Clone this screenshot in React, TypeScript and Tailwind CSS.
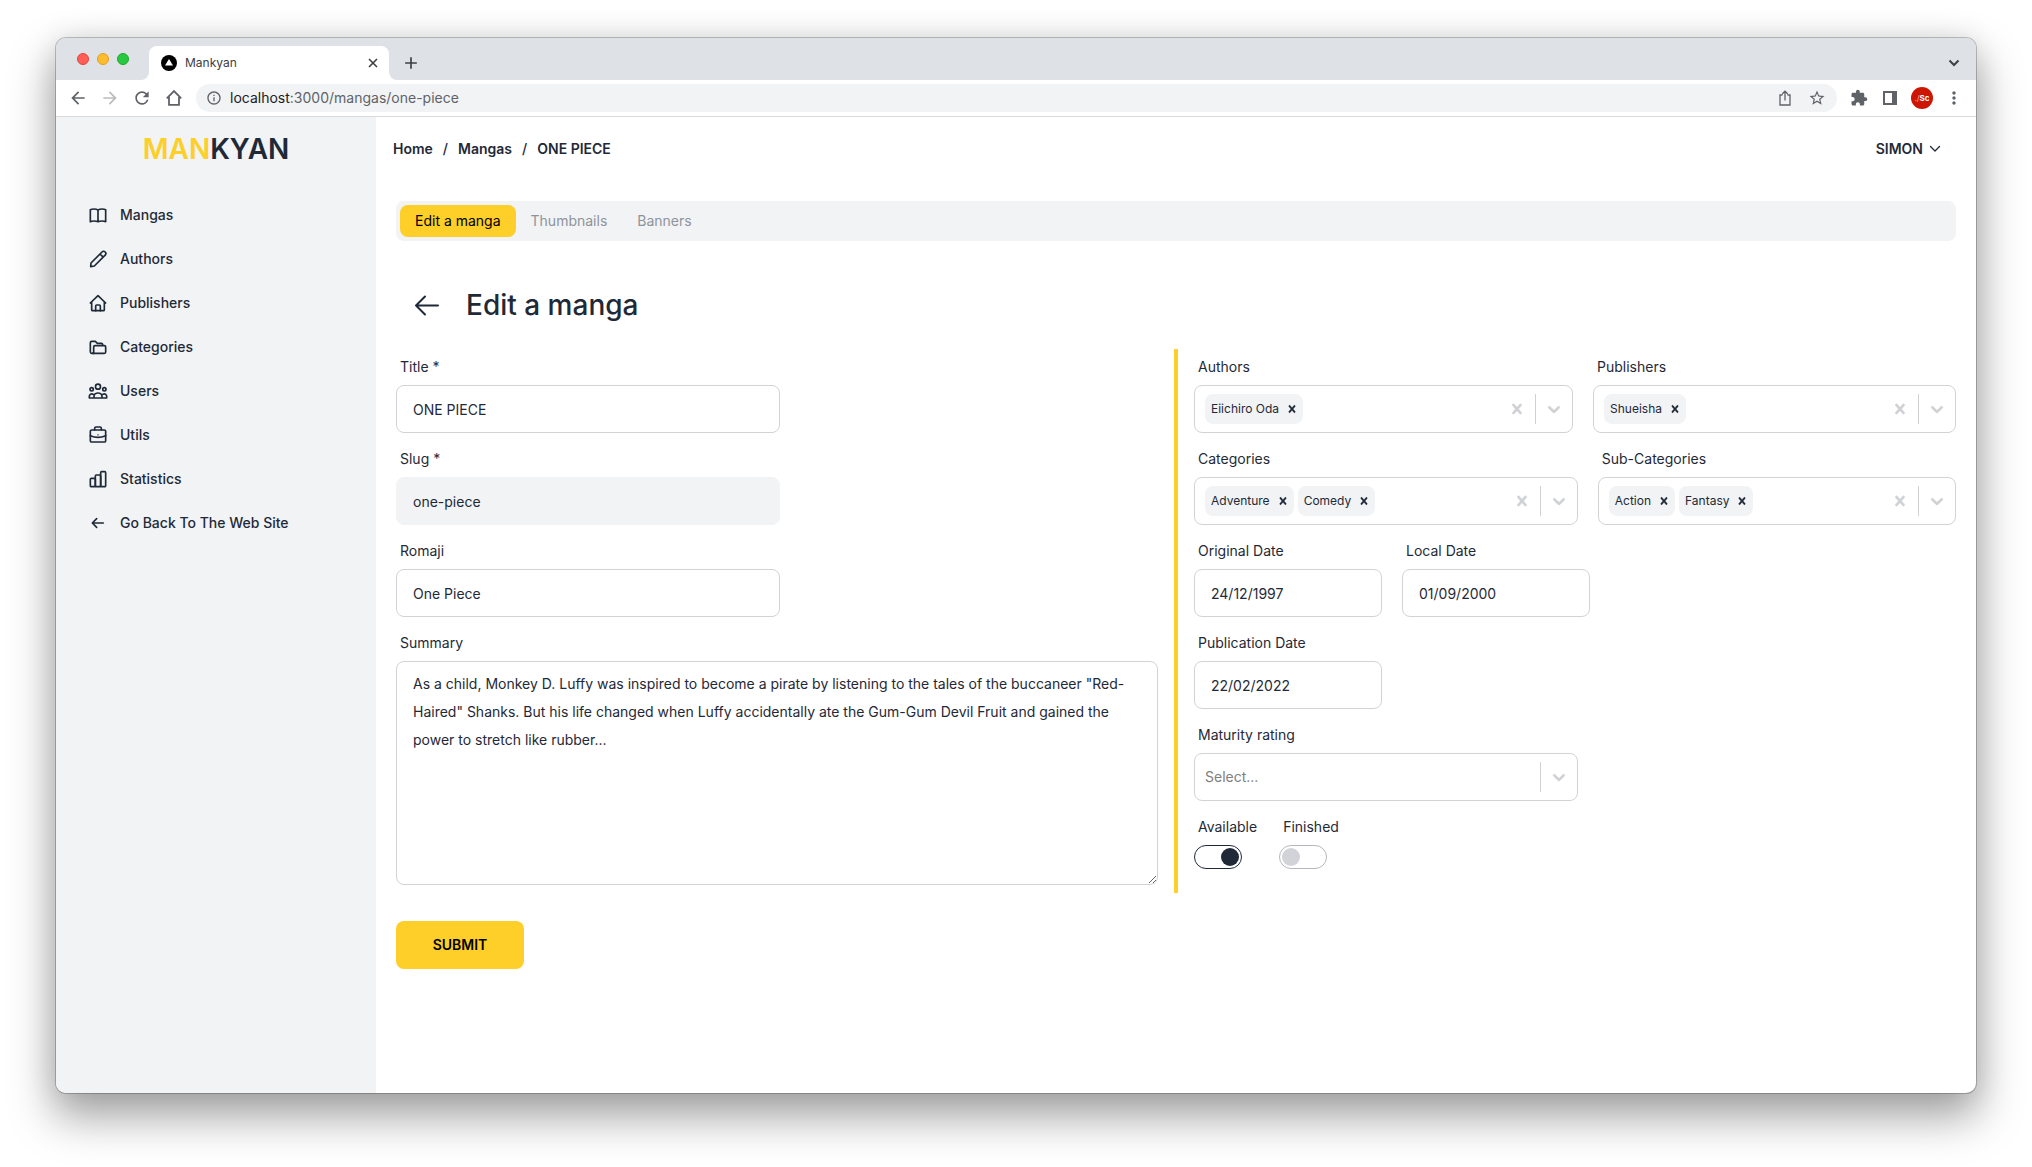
import { useId, type ReactNode } from "react";
import { MdExtension, MdStarOutline, MdRefresh, MdArrowBack, MdArrowForward, MdAdd, MdMoreVert, MdOutlineInfo } from "react-icons/md";

const CROSS =
  "M14.348 14.849c-0.469 0.469-1.229 0.469-1.697 0l-2.651-3.030-2.651 3.029c-0.469 0.469-1.229 0.469-1.697 0-0.469-0.469-0.469-1.229 0-1.697l2.758-3.15-2.759-3.152c-0.469-0.469-0.469-1.228 0-1.697s1.228-0.469 1.697 0l2.652 3.031 2.651-3.031c0.469-0.469 1.228-0.469 1.697 0s0.469 1.229 0 1.697l-2.758 3.152 2.758 3.15c0.469 0.469 0.469 1.229 0 1.698z";
const CHEVRON =
  "M4.516 7.548c0.436-0.446 1.043-0.481 1.576 0l3.908 3.747 3.908-3.747c0.533-0.481 1.141-0.446 1.574 0 0.436 0.445 0.408 1.197 0 1.615-0.406 0.418-4.695 4.502-4.695 4.502-0.217 0.223-0.502 0.335-0.787 0.335s-0.57-0.112-0.789-0.335c0 0-4.287-4.084-4.695-4.502s-0.436-1.17 0-1.615z";

function Glyph({ d, size }: { d: string; size: number }) {
  return (
    <svg width={size} height={size} viewBox="0 0 20 20" fill="currentColor" stroke="currentColor" strokeWidth="0.4" aria-hidden="true">
      <path d={d} />
    </svg>
  );
}

function NavIcon({ children }: { children: ReactNode }) {
  return (
    <svg
      className="size-5 shrink-0"
      viewBox="0 0 60 60"
      fill="none"
      stroke="currentColor"
      strokeWidth="5"
      strokeLinecap="round"
      strokeLinejoin="round"
      aria-hidden="true"
    >
      {children}
    </svg>
  );
}

const navItems: { label: string; icon: ReactNode }[] = [
  {
    label: "Mangas",
    icon: (
      <path d="M30 15c-4-2.500-8-3-12-3s-8 .5-11 2v36c3-1.500 7-2 11-2s8 .5 12 2c4-1.500 8-2 12-2s8 .5 11 2V14c-3-1.500-7-2-11-2s-8 .5-12 3zv35" />
    ),
  },
  {
    label: "Authors",
    icon: <path d="M8 53l1-11L42 9a6.500 6.500 0 0 1 9.500 9.500L19 51zM36 15l9.500 9.500" />,
  },
  {
    label: "Publishers",
    icon: (
      <>
        <path d="M7 30L30 8l23 22M11 27v23a3 3 0 0 0 3 3h32a3 3 0 0 0 3-3V27" />
        <path d="M23 53V39a3 3 0 0 1 3-3h8a3 3 0 0 1 3 3v14" />
      </>
    ),
  },
  {
    label: "Categories",
    icon: (
      <>
        <path d="M18 49h-7a4 4 0 0 1-4-4V17a4 4 0 0 1 4-4h11l6 6h12a4 4 0 0 1 4 4v2" />
        <path d="M21 26h28a4 4 0 0 1 4 4v15a4 4 0 0 1-4 4H14c2-1 3-3 3-5V30a4 4 0 0 1 4-4z" />
      </>
    ),
  },
  {
    label: "Users",
    icon: (
      <>
        <circle cx="30" cy="17" r="7.500" />
        <circle cx="11" cy="25" r="5" />
        <circle cx="49" cy="25" r="5" />
        <path d="M18 51v-5a12 10 0 0 1 24 0v5zM18 51H4v-5c0-6 6-9 11-6M42 51h14v-5c0-6-6-9-11-6" />
      </>
    ),
  },
  {
    label: "Utils",
    icon: (
      <>
        <rect x="7" y="15" width="46" height="36" rx="4" />
        <path d="M20 15v-5a4 4 0 0 1 4-4h12a4 4 0 0 1 4 4v5M7 32c14 6 32 6 46 0" />
        <path d="M30 29v1" strokeWidth="3.500" />
      </>
    ),
  },
  {
    label: "Statistics",
    icon: (
      <>
        <rect x="7" y="28" width="15" height="25" rx="3" />
        <rect x="22" y="18" width="16" height="35" rx="3" />
        <rect x="38" y="8" width="15" height="45" rx="3" />
      </>
    ),
  },
  {
    label: "Go Back To The Web Site",
    icon: <path d="M46 30H14M26 17L13 30l13 13" />,
  },
];

function Label({ htmlFor, children }: { htmlFor: string; children: ReactNode }) {
  return (
    <label htmlFor={htmlFor} className="block px-1 text-sm">
      {children}
    </label>
  );
}

function TextField({ label, value, className, readOnly }: { label: string; value: string; className: string; readOnly?: boolean }) {
  const id = useId();
  return (
    <div className="flex flex-col gap-2">
      <Label htmlFor={id}>{label}</Label>
      <input
        id={id}
        type="text"
        defaultValue={value}
        readOnly={readOnly}
        className={
          readOnly
            ? `h-12 rounded-lg border border-[#f1f3f5] bg-[#f1f3f5] px-4 text-sm outline-none ${className}`
            : `h-12 rounded-lg border border-[#d1d3d6] bg-white px-4 text-sm outline-none ${className}`
        }
      />
    </div>
  );
}

function MultiSelect({ label, values }: { label: string; values: string[] }) {
  const id = useId();
  return (
    <div className="flex flex-auto flex-col gap-2">
      <Label htmlFor={id}>{label}</Label>
      <div className="flex h-12 items-center rounded-lg border border-[#d1d3d6]">
        <div className="flex min-w-0 flex-1 items-center gap-1 px-2.5">
          {values.map((v) => (
            <span key={v} className="flex h-[30px] items-center rounded-lg bg-[#f1f3f5] text-xs">
              <span className="pr-0.5 pl-1.5">{v}</span>
              <button type="button" aria-label={`Remove ${v}`} className="px-1">
                <Glyph d={CROSS} size={14} />
              </button>
            </span>
          ))}
          <input id={id} type="text" className="w-0 min-w-0 flex-1 text-sm outline-none" />
        </div>
        <div className="flex items-center text-[#cfd1d4]">
          <button type="button" aria-label={`Clear ${label}`} className="p-2">
            <Glyph d={CROSS} size={20} />
          </button>
          <span className="h-[30px] w-px bg-[#cfd1d4]" />
          <button type="button" aria-label={`Open ${label}`} className="p-2">
            <Glyph d={CHEVRON} size={20} />
          </button>
        </div>
      </div>
    </div>
  );
}

function Toggle({ label, checked }: { label: string; checked?: boolean }) {
  const id = useId();
  return (
    <div className="flex flex-col gap-2">
      <Label htmlFor={id}>{label}</Label>
      <input
        id={id}
        type="checkbox"
        role="switch"
        defaultChecked={checked}
        className="flex h-6 w-12 appearance-none items-center rounded-full border border-[#b4b7bd] px-0.5 before:size-[18px] before:rounded-full before:bg-[#d1d3d8] checked:justify-end checked:border-gray-800 checked:before:bg-[#1f2937]"
      />
    </div>
  );
}

function BrowserChrome() {
  return (
    <div className="text-[#5f6368]">
      <div className="flex h-[42px] items-end bg-[#dee1e6] pr-3">
        <div className="flex gap-2 self-center pl-[21px]">
          <span className="size-3 rounded-full border border-[#e0443e] bg-[#ff5f57]" />
          <span className="size-3 rounded-full border border-[#dea123] bg-[#febc2e]" />
          <span className="size-3 rounded-full border border-[#1aab29] bg-[#28c840]" />
        </div>
        <svg className="ml-3 size-2" viewBox="0 0 8 8" aria-hidden="true">
          <path d="M8 0v8H0a8 8 0 0 0 8-8z" fill="#fff" />
        </svg>
        <div className="flex h-[34px] w-60 items-center rounded-t-lg bg-white px-3">
          <svg className="size-4" viewBox="0 0 16 16" aria-hidden="true">
            <circle cx="8" cy="8" r="8" fill="#000" />
            <path d="M8 4l4 6.500H4z" fill="#fff" />
          </svg>
          <span className="ml-2 flex-1 text-xs text-[#3c4043]">Mankyan</span>
          <button type="button" aria-label="Close tab" className="-mr-0.5 text-[#3c4043]">
            <svg className="size-3" viewBox="0 0 12 12" fill="none" stroke="currentColor" strokeWidth="1.600" aria-hidden="true">
              <path d="M2 2l8 8M10 2l-8 8" />
            </svg>
          </button>
        </div>
        <svg className="size-2" viewBox="0 0 8 8" aria-hidden="true">
          <path d="M0 0v8h8a8 8 0 0 1-8-8z" fill="#fff" />
        </svg>
        <button type="button" aria-label="New tab" className="flex h-[34px] items-center pl-1 text-[#3c4043]">
          <MdAdd className="size-5" />
        </button>
        <button type="button" aria-label="Search tabs" className="ml-auto flex h-[34px] items-center px-1 text-[#3c4043]">
          <svg className="size-3" viewBox="0 0 12 12" fill="none" stroke="currentColor" strokeWidth="2" aria-hidden="true">
            <path d="M1.500 3.500L6 8l4.500-4.500" />
          </svg>
        </button>
      </div>
      <div className="flex h-[37px] items-center border-b border-[#d9dadd] bg-white px-3">
        <div className="flex items-center gap-3">
          <button type="button" aria-label="Back">
            <MdArrowBack className="size-5" />
          </button>
          <button type="button" aria-label="Forward" className="text-[#babcbe]">
            <MdArrowForward className="size-5" />
          </button>
          <button type="button" aria-label="Reload">
            <MdRefresh className="size-5" />
          </button>
          <button type="button" aria-label="Home page">
            <svg className="size-5" viewBox="0 0 20 20" fill="none" stroke="currentColor" strokeWidth="1.800" aria-hidden="true">
              <path d="M2.800 10.300L10 3l7.200 7.300M5 9v7.800h10V9" />
            </svg>
          </button>
        </div>
        <div className="ml-3 flex h-7 flex-1 items-center rounded-full bg-[#f1f3f4] px-2.5">
          <MdOutlineInfo className="size-4" />
          <p className="ml-2 flex-1 text-sm text-[#5f6368]">
            <span className="text-[#202124]">localhost</span>:3000/mangas/one-piece
          </p>
          <button type="button" aria-label="Share" className="mr-3">
            <svg className="size-5" viewBox="0 0 20 20" fill="none" stroke="currentColor" strokeWidth="1.300" aria-hidden="true">
              <path d="M7.500 7H5v10h10V7h-2.500M10 12.500V3.500M7.200 6L10 3.200 12.800 6" />
            </svg>
          </button>
          <button type="button" aria-label="Bookmark">
            <MdStarOutline className="size-5 p-px" />
          </button>
        </div>
        <div className="flex items-center gap-[11px] pl-3">
          <button type="button" aria-label="Extensions">
            <MdExtension className="size-5 p-px" />
          </button>
          <button type="button" aria-label="Side panel">
            <svg className="size-5" viewBox="0 0 20 20" aria-hidden="true">
              <path d="M3 3h14v14H3zM5 5v10h7V5z" fill="currentColor" fillRule="evenodd" />
            </svg>
          </button>
          <button
            type="button"
            aria-label="Profile"
            className="flex size-[22px] items-center justify-center rounded-full bg-[#cc1602] text-[8px] font-bold text-white"
          >
            <span className="font-normal text-red-300">./</span>Sc
          </button>
          <button type="button" aria-label="Menu">
            <MdMoreVert className="size-5" />
          </button>
        </div>
      </div>
    </div>
  );
}

function Sidebar() {
  return (
    <aside className="w-80 shrink-0 bg-[#f1f3f5]">
      <div className="flex h-16 items-center justify-center text-[28px] font-semibold">
        <span className="text-[#fdcf28]">MAN</span>
        <span>KYAN</span>
      </div>
      <nav className="mt-3 flex flex-col">
        {navItems.map((item) => (
          <a key={item.label} href="#" className="flex h-11 items-center gap-3 px-8 text-sm font-medium">
            <NavIcon>{item.icon}</NavIcon>
            {item.label}
          </a>
        ))}
      </nav>
    </aside>
  );
}

const summary =
  'As a child, Monkey D. Luffy was inspired to become a pirate by listening to the tales of the buccaneer "Red-Haired" Shanks. But his life changed when Luffy accidentally ate the Gum-Gum Devil Fruit and gained the power to stretch like rubber...';

export default function App() {
  return (
    <div className="flex min-h-screen flex-col bg-white px-14 pt-[38px] pb-[74px] font-[Inter,sans-serif] text-[#1f2937]">
      <div className="flex flex-1 flex-col overflow-hidden rounded-[10px] bg-white shadow-[0_0_0_1px_rgba(0,0,0,0.22),0_22px_44px_3px_rgba(0,0,0,0.35),0_0_30px_rgba(0,0,0,0.1)]">
        <BrowserChrome />
        <div className="flex flex-1">
          <Sidebar />
          <main className="min-w-0 flex-1">
            <header className="flex h-16 items-center justify-between pr-[35px] pl-[17px] text-sm font-semibold">
              <nav aria-label="Breadcrumb" className="flex gap-2.5">
                <a href="#">Home</a>
                <span className="font-medium">/</span>
                <a href="#">Mangas</a>
                <span className="font-medium">/</span>
                <a href="#">ONE PIECE</a>
              </nav>
              <button type="button" className="flex items-center gap-1.5">
                SIMON
                <svg className="size-3" viewBox="0 0 12 12" fill="none" stroke="currentColor" strokeWidth="1.300" strokeLinecap="round" strokeLinejoin="round" aria-hidden="true">
                  <path d="M1.500 3.500L6 8l4.500-4.500" />
                </svg>
              </button>
            </header>
            <div className="px-5 pt-5">
              <div role="tablist" className="flex rounded-lg bg-[#f1f3f5] p-1 text-sm text-[#8f939b]">
                <button type="button" role="tab" aria-selected="true" className="h-8 rounded-lg bg-[#fdcf28] px-[15px] text-black">
                  Edit a manga
                </button>
                <button type="button" role="tab" aria-selected="false" className="h-8 px-[15px]">
                  Thumbnails
                </button>
                <button type="button" role="tab" aria-selected="false" className="h-8 px-[15px]">
                  Banners
                </button>
              </div>
              <div className="mt-11 flex h-10 items-center gap-6 pl-4">
                <a href="#" aria-label="Back to mangas">
                  <svg className="size-[30px]" viewBox="0 0 30 30" fill="none" stroke="currentColor" strokeWidth="2" strokeLinecap="round" strokeLinejoin="round" aria-hidden="true">
                    <path d="M26 15.500H4M13 6.500L4 15.500l9 9" />
                  </svg>
                </a>
                <h1 className="text-[28px] font-medium">Edit a manga</h1>
              </div>
              <form className="mt-6" onSubmit={(e) => e.preventDefault()}>
                <div className="flex">
                  <div className="flex min-w-0 flex-1 flex-col gap-4 py-2 pr-4">
                    <TextField label="Title *" value="ONE PIECE" className="w-96" />
                    <TextField label="Slug *" value="one-piece" className="w-96" readOnly />
                    <TextField label="Romaji" value="One Piece" className="w-96" />
                    <div className="flex flex-col gap-2">
                      <Label htmlFor="summary">Summary</Label>
                      <textarea
                        id="summary"
                        defaultValue={summary}
                        className="h-56 w-full rounded-lg border border-[#d1d3d6] px-4 py-2 text-sm/7 outline-none"
                      />
                    </div>
                  </div>
                  <div className="flex min-w-0 flex-1 flex-col gap-4 border-l-4 border-[#fdcf28] py-2 pl-4">
                    <div className="flex gap-5">
                      <MultiSelect label="Authors" values={["Eiichiro Oda"]} />
                      <MultiSelect label="Publishers" values={["Shueisha"]} />
                    </div>
                    <div className="flex gap-5">
                      <MultiSelect label="Categories" values={["Adventure", "Comedy"]} />
                      <MultiSelect label="Sub-Categories" values={["Action", "Fantasy"]} />
                    </div>
                    <div className="flex gap-5">
                      <TextField label="Original Date" value="24/12/1997" className="w-47" />
                      <TextField label="Local Date" value="01/09/2000" className="w-47" />
                    </div>
                    <div className="flex">
                      <TextField label="Publication Date" value="22/02/2022" className="w-47" />
                    </div>
                    <div className="flex flex-col gap-2">
                      <Label htmlFor="rating">Maturity rating</Label>
                      <div className="flex h-12 w-96 items-center rounded-lg border border-[#d1d3d6] text-[#cfd1d4]">
                        <select id="rating" className="h-full flex-1 appearance-none px-2.5 text-sm text-[#808080] outline-none">
                          <option>Select...</option>
                        </select>
                        <span className="h-[30px] w-px bg-[#cfd1d4]" />
                        <span className="p-2">
                          <Glyph d={CHEVRON} size={20} />
                        </span>
                      </div>
                    </div>
                    <div className="flex gap-4.5">
                      <Toggle label="Available" checked />
                      <Toggle label="Finished" />
                    </div>
                  </div>
                </div>
                <button type="submit" className="mt-7 h-12 w-32 rounded-lg bg-[#fdcf28] text-sm font-semibold text-black">
                  SUBMIT
                </button>
              </form>
            </div>
          </main>
        </div>
      </div>
    </div>
  );
}
